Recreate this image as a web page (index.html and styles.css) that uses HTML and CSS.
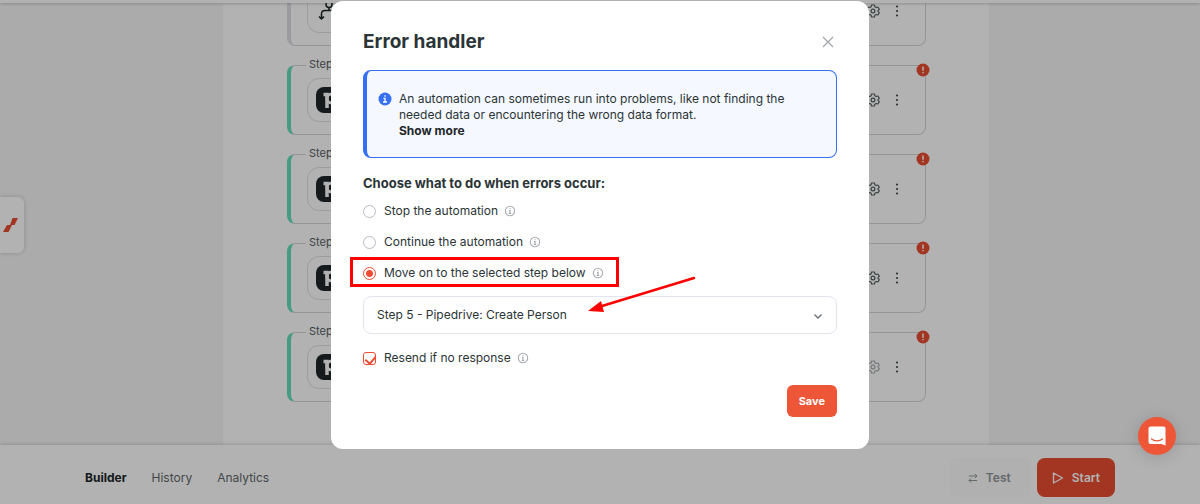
FILE: index.html
```html
<!DOCTYPE html>
<html lang="en">
<head>
    <meta charset="UTF-8">
    <meta name="viewport" content="width=device-width, initial-scale=1.0">
    <title>Error handler</title>
    <link rel="stylesheet" href="styles.css">
</head>
<body>
    <!-- shared icons -->
    <svg class="sprite" width="0" height="0" aria-hidden="true">
        <symbol id="gear" viewBox="0 0 14 14">
            <path d="M5.600 1h2.800l.5 1.800 1.200.7 1.800-.5 1.400 2.400L12 6.700v.6l1.300 1.300-1.400 2.400-1.800-.5-1.200.7-.5 1.800H5.600l-.5-1.800-1.200-.7-1.800.5L.7 8.600 2 7.300v-.6L.7 5.400 2.100 3l1.800.5 1.200-.7z" fill="none" stroke="currentColor" stroke-width="1.200" stroke-linejoin="round"/>
            <circle cx="7" cy="7" r="1.900" fill="none" stroke="currentColor" stroke-width="1.200"/>
        </symbol>
        <symbol id="dots" viewBox="0 0 4 14">
            <circle cx="2" cy="2.500" r="1.100"/><circle cx="2" cy="7" r="1.100"/><circle cx="2" cy="11.500" r="1.100"/>
        </symbol>
        <symbol id="alert" viewBox="0 0 14 14">
            <circle cx="7" cy="7" r="6.500" fill="#e84e32"/>
            <path d="M7 3.500v4.200M7 9v1.300" stroke="#fff" stroke-width="1.500"/>
        </symbol>
        <symbol id="info" viewBox="0 0 12 12">
            <circle cx="6" cy="6" r="4.700" fill="none" stroke="#a9adb2" stroke-width="1.100"/>
            <path d="M6 3.200v1M5 5.500h1v3M4.800 8.500h2.400" fill="none" stroke="#a0a4aa" stroke-width="1.100"/>
        </symbol>
        <symbol id="pipedrive" viewBox="0 0 26 26">
            <rect width="26" height="26" rx="8" fill="#1f2729"/>
            <path d="M7.500 7.500h3.500v13.500" fill="none" stroke="#fff" stroke-width="3.500"/>
            <circle cx="15.500" cy="11.500" r="4.500" fill="none" stroke="#fff" stroke-width="3.200"/>
        </symbol>
    </svg>

    <div class="topbar"></div>

    <main class="canvas">
        <div class="steps">
            <div class="step plain">
                <div class="tile">
                    <svg width="26" height="26" viewBox="0 0 26 26" fill="none" stroke="#1a2426" stroke-width="1.500">
                        <circle cx="13" cy="6.500" r="3"/>
                        <path d="M13 9.500v3M13 12.500h-4c-2 0-3.500 1.500-3.500 3.500v5M3 18.500l2.500 2.500 2.500-2.500M13 12.500h4c2 0 3.500 1.500 3.500 3.500v5M18 18.500l2.500 2.500 2.500-2.500"/>
                    </svg>
                </div>
                <svg class="gear" width="14" height="14"><use href="#gear"/></svg>
                <svg class="dots" width="4" height="14"><use href="#dots"/></svg>
            </div>
            <div class="step">
                <span class="step-name">Step 2</span>
                <div class="tile"><svg width="26" height="26"><use href="#pipedrive"/></svg></div>
                <svg class="gear" width="14" height="14"><use href="#gear"/></svg>
                <svg class="dots" width="4" height="14"><use href="#dots"/></svg>
                <svg class="badge" width="14" height="14"><use href="#alert"/></svg>
            </div>
            <div class="step">
                <span class="step-name">Step 3</span>
                <div class="tile"><svg width="26" height="26"><use href="#pipedrive"/></svg></div>
                <svg class="gear" width="14" height="14"><use href="#gear"/></svg>
                <svg class="dots" width="4" height="14"><use href="#dots"/></svg>
                <svg class="badge" width="14" height="14"><use href="#alert"/></svg>
            </div>
            <div class="step">
                <span class="step-name">Step 4</span>
                <div class="tile"><svg width="26" height="26"><use href="#pipedrive"/></svg></div>
                <svg class="gear" width="14" height="14"><use href="#gear"/></svg>
                <svg class="dots" width="4" height="14"><use href="#dots"/></svg>
                <svg class="badge" width="14" height="14"><use href="#alert"/></svg>
            </div>
            <div class="step">
                <span class="step-name">Step 5</span>
                <div class="tile"><svg width="26" height="26"><use href="#pipedrive"/></svg></div>
                <svg class="gear muted" width="14" height="14"><use href="#gear"/></svg>
                <svg class="dots" width="4" height="14"><use href="#dots"/></svg>
                <svg class="badge" width="14" height="14"><use href="#alert"/></svg>
            </div>
        </div>
    </main>

    <div class="side-tab">
        <svg width="16" height="16" viewBox="0 0 16 16" fill="#e84e32">
            <path d="M9.500 1h5.500l-3.500 7H7zM4 8h5l-3.500 7H0z"/>
        </svg>
    </div>

    <footer class="bottombar">
        <nav class="tabs">
            <a href="#" class="active">Builder</a>
            <a href="#">History</a>
            <a href="#">Analytics</a>
        </nav>
        <button class="btn btn-test" type="button">
            <svg width="10" height="10" viewBox="0 0 10 10" fill="none" stroke="currentColor">
                <path d="M1 3h8M7 1l2 2-2 2M9 7.500H1M3 5.500l-2 2 2 2"/>
            </svg>
            Test
        </button>
        <button class="btn btn-start" type="button">
            <svg width="12" height="12" viewBox="0 0 12 12" fill="none" stroke="currentColor" stroke-width="1.300" stroke-linejoin="round">
                <path d="M1.500 1l9 5-9 5z"/>
            </svg>
            Start
        </button>
    </footer>

    <div class="overlay">
        <form class="modal" role="dialog" aria-labelledby="title">
            <header class="modal-head">
                <h1 id="title">Error handler</h1>
                <button class="close" type="button" aria-label="Close">
                    <svg width="12" height="12" viewBox="0 0 12 12" stroke="#a3a7a9" stroke-width="1.300"><path d="M1 1l10 10M11 1L1 11"/></svg>
                </button>
            </header>

            <div class="notice">
                <svg width="14" height="14" viewBox="0 0 14 14">
                    <circle cx="7" cy="7" r="6.500" fill="#356ff6"/>
                    <path d="M7 3.300v1.500M5.500 6.300H7v3.500M5 10h4" fill="none" stroke="#fff" stroke-width="1.300"/>
                </svg>
                <p>An automation can sometimes run into problems, like not finding the needed data or encountering the wrong data format.<br><a href="#">Show more</a></p>
            </div>

            <h2>Choose what to do when errors occur:</h2>

            <div class="options">
                <label class="option">
                    <input type="radio" name="action">
                    Stop the automation
                    <svg width="12" height="12"><use href="#info"/></svg>
                </label>
                <label class="option">
                    <input type="radio" name="action">
                    Continue the automation
                    <svg width="12" height="12"><use href="#info"/></svg>
                </label>
                <label class="option marked">
                    <input type="radio" name="action" checked>
                    Move on to the selected step below
                    <svg width="12" height="12"><use href="#info"/></svg>
                </label>
            </div>

            <div class="select">
                <select aria-label="Step to move on to">
                    <option>Step 5 - Pipedrive: Create Person</option>
                </select>
                <svg class="chevron" width="10" height="10" viewBox="0 0 10 10" fill="none" stroke="#6a7073" stroke-width="1.400"><path d="M1.500 3.500L5 7l3.500-3.500"/></svg>
                <svg class="arrow" width="110" height="40" viewBox="0 0 110 40">
                    <path d="M106 3L14 31" stroke="#f00" stroke-width="2.500" stroke-linecap="round"/>
                    <path d="M0 36l13-10 3 11z" fill="#f00"/>
                </svg>
            </div>

            <label class="option">
                <input type="checkbox" checked>
                Resend if no response
                <svg width="12" height="12"><use href="#info"/></svg>
            </label>

            <div class="actions">
                <button class="save" type="submit">Save</button>
            </div>
        </form>
    </div>

    <button class="chat" type="button" aria-label="Open chat">
        <svg width="18" height="20" viewBox="0 0 18 20">
            <path d="M2.500.5h13a2 2 0 0 1 2 2v17l-4-1.500h-11a2 2 0 0 1-2-2V2.500a2 2 0 0 1 2-2z" fill="#fff"/>
            <path d="M3.500 13c3 2.500 8 2.500 11 0" fill="none" stroke="#ed5637" stroke-width="1.200" stroke-linecap="round"/>
        </svg>
    </button>
</body>
</html>
```
FILE: styles.css
```css
* {
    box-sizing: border-box;
}

body {
    margin: 0;
    height: 100vh;
    display: flex;
    flex-direction: column;
    overflow: hidden;
    background: #f5f5f5;
    color: #2b3436;
    font-family: Inter, "Liberation Sans", sans-serif;
    font-size: 12px;
    line-height: 16px;
}

h1, h2, p {
    margin: 0;
}

button, select {
    font: inherit;
    border: none;
    cursor: pointer;
}

svg {
    display: block;
    flex: none;
}

.sprite {
    position: absolute;
}

/* builder page */
.topbar {
    flex: none;
    height: 3px;
    background: #fff;
    box-shadow: 0 1px 3px rgba(0, 0, 0, 0.2);
    z-index: 1;
}

.canvas {
    flex: 1;
    min-height: 0;
    display: flex;
    justify-content: center;
    padding-left: 12px;
    overflow: hidden;
}

.steps {
    width: 100%;
    max-width: 766px;
    padding: 0 63px 43px 64px;
    display: flex;
    flex-direction: column;
    justify-content: flex-end;
    gap: 19px;
    background: #fff;
}

.step {
    position: relative;
    flex: none;
    height: 70px;
    display: flex;
    align-items: center;
    padding: 0 26px 0 16px;
    border: 1px solid #d4d6d7;
    border-left: 4px solid #64e0bb;
    border-radius: 8px;
    color: #566063;
}

.step.plain {
    border-left-color: #dcdfe3;
}

.step-name {
    position: absolute;
    top: -10px;
    left: 15px;
    padding: 0 3px;
    background: #fff;
    font-size: 11px;
}

.tile {
    width: 44px;
    height: 44px;
    display: flex;
    align-items: center;
    justify-content: center;
    border: 1px solid #dfe0e2;
    border-radius: 12px;
}

.gear {
    margin-left: auto;
}

.gear.muted {
    opacity: 0.5;
}

.dots {
    margin-left: 15px;
    fill: #3f484b;
}

.badge {
    position: absolute;
    top: -3px;
    right: -5px;
}

.side-tab {
    position: fixed;
    left: 0;
    top: 197px;
    width: 24px;
    height: 56px;
    display: flex;
    align-items: center;
    justify-content: center;
    padding-right: 3px;
    background: #fff;
    border-radius: 0 6px 6px 0;
    box-shadow: 0 0 5px rgba(0, 0, 0, 0.2);
}

.bottombar {
    flex: none;
    display: flex;
    align-items: center;
    gap: 7px;
    padding: 13px 85px 7px;
    background: #fff;
    box-shadow: 0 -1px 3px rgba(0, 0, 0, 0.15);
}

.tabs {
    flex: 1;
    display: flex;
    gap: 25px;
}

.tabs a {
    color: #5f686b;
    text-decoration: none;
}

.tabs a.active {
    color: #1a2628;
    font-weight: 700;
}

.btn {
    height: 39px;
    display: flex;
    align-items: center;
    gap: 8px;
    padding: 0 15px;
    border-radius: 8px;
    font-weight: 600;
}

.btn-test {
    padding: 0 19px;
    background: #fcfcfc;
    color: #8f9698;
}

.btn-start {
    background: #e84e32;
    color: #fff;
}

/* modal */
.overlay {
    position: fixed;
    inset: 0;
    z-index: 2;
    display: flex;
    justify-content: center;
    align-items: flex-start;
    padding-top: 1px;
    background: rgba(0, 0, 0, 0.3);
}

.modal {
    width: 100%;
    max-width: 538px;
    padding: 25px 32px 32px;
    background: #fff;
    border-radius: 12px;
}

.modal-head {
    display: flex;
    align-items: center;
    justify-content: space-between;
    margin-bottom: 12px;
}

.modal-head h1 {
    font-size: 19px;
    line-height: 32px;
    font-weight: 700;
}

.close {
    padding: 3px;
    background: none;
}

.notice {
    display: flex;
    gap: 7px;
    padding: 20px 48px 18px 11px;
    background: #f5f8ff;
    border: 1px solid #356ff6;
    border-left-width: 4px;
    border-radius: 8px;
}

.notice svg {
    margin-top: 1px;
}

.notice a {
    color: #1f2729;
    font-weight: 700;
    text-decoration: none;
}

h2 {
    margin: 15px 0 8px;
    font-size: 13px;
    line-height: 20px;
    font-weight: 700;
}

.options {
    display: flex;
    flex-direction: column;
    align-items: flex-start;
    gap: 11px;
}

.option {
    position: relative;
    display: flex;
    align-items: center;
    line-height: 20px;
}

.option svg {
    margin-left: 6px;
}

.option input {
    appearance: none;
    width: 13px;
    height: 13px;
    margin: 0 8px 0 0;
    border: 1px solid #b7bbc3;
    border-radius: 50%;
    background: #fff;
}

.option input:checked {
    border-color: #ef4b35;
}

.option input[type="radio"]:checked {
    background: radial-gradient(circle, #ef4b35 3px, #fff 4px);
}

.option input[type="checkbox"] {
    position: relative;
    border-radius: 3px;
}

.option input[type="checkbox"]:checked::after {
    content: "";
    position: absolute;
    left: 3px;
    top: 1px;
    width: 5px;
    height: 8px;
    border: solid #ef4b35;
    border-width: 0 2px 2px 0;
    transform: rotate(40deg);
}

/* red annotation box */
.marked::after {
    content: "";
    position: absolute;
    inset: -6px -15px -4px -13px;
    border: 3px solid #f00;
}

.select {
    position: relative;
    margin: 13px 0 14px;
}

.select select {
    appearance: none;
    display: block;
    width: 100%;
    height: 38px;
    padding: 0 32px 0 13px;
    border: 1px solid #e3e5ee;
    border-radius: 8px;
    background: #fff;
    color: inherit;
}

.chevron {
    position: absolute;
    right: 14px;
    top: 15px;
    pointer-events: none;
}

.arrow {
    position: absolute;
    left: 225px;
    top: -21px;
    pointer-events: none;
}

.actions {
    display: flex;
    justify-content: flex-end;
    margin-top: 17px;
}

.save {
    height: 32px;
    padding: 0 12px;
    border-radius: 6px;
    background: #ed5637;
    color: #fff;
    font-size: 11px;
    font-weight: 700;
}

.chat {
    position: fixed;
    right: 24px;
    bottom: 49px;
    z-index: 3;
    width: 38px;
    height: 38px;
    display: flex;
    align-items: center;
    justify-content: center;
    padding: 0;
    border-radius: 50%;
    background: #ed5637;
    box-shadow: 0 2px 16px rgba(0, 0, 0, 0.15);
}
```
